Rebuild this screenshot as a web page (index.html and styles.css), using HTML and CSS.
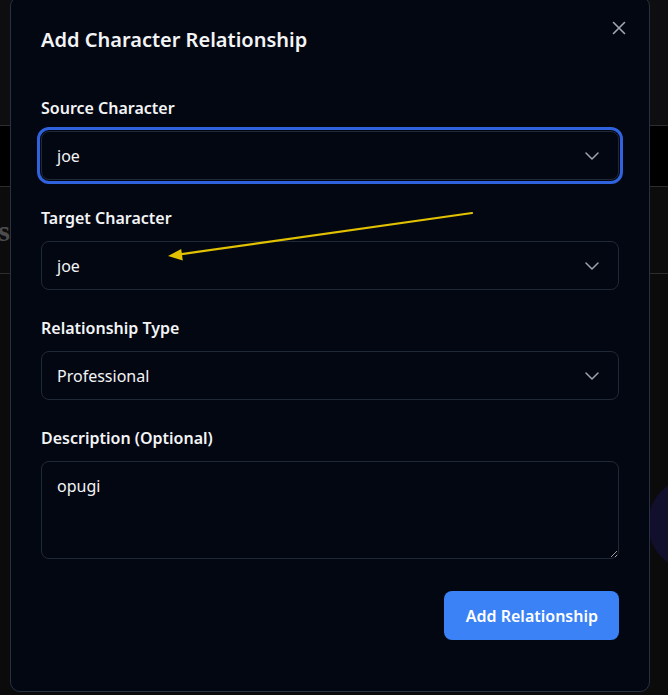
FILE: index.html
```html
<!DOCTYPE html>
<html lang="en">
<head>
<meta charset="utf-8">
<title>Add Character Relationship</title>
<link rel="stylesheet" href="styles.css">
</head>
<body>
<div class="page">
  <header class="topbar"></header>
  <nav class="tabs"></nav>
  <section class="heading-row">
    <div class="heading-clip"><h1 class="page-title">Relationships</h1></div>
  </section>
  <main class="content"></main>
  <div class="fab"></div>
</div>

<div class="overlay">
  <div class="dialog" role="dialog" aria-labelledby="dlg-title">
    <button class="close" type="button" aria-label="Close">
      <svg width="14" height="14" viewBox="0 0 14 14" fill="none" stroke="currentColor" stroke-width="1.6" stroke-linecap="round"><path d="M1.5 1.5l11 11M12.5 1.5l-11 11"/></svg>
    </button>
    <h2 class="title" id="dlg-title">Add Character Relationship</h2>
    <form class="form">
      <div class="field">
        <label class="label">Source Character</label>
        <div class="select is-focused"><span>joe</span><svg class="chev" width="14" height="8" viewBox="0 0 14 8" fill="none" stroke="currentColor" stroke-width="1.5" stroke-linecap="round" stroke-linejoin="round"><path d="M1 1l6 6 6-6"/></svg></div>
      </div>
      <div class="field">
        <label class="label">Target Character</label>
        <div class="select"><span>joe</span><svg class="chev" width="14" height="8" viewBox="0 0 14 8" fill="none" stroke="currentColor" stroke-width="1.5" stroke-linecap="round" stroke-linejoin="round"><path d="M1 1l6 6 6-6"/></svg></div>
      </div>
      <div class="field">
        <label class="label">Relationship Type</label>
        <div class="select"><span>Professional</span><svg class="chev" width="14" height="8" viewBox="0 0 14 8" fill="none" stroke="currentColor" stroke-width="1.5" stroke-linecap="round" stroke-linejoin="round"><path d="M1 1l6 6 6-6"/></svg></div>
      </div>
      <div class="field">
        <label class="label" for="desc">Description (Optional)</label>
        <textarea class="textarea" id="desc">opugi</textarea>
      </div>
      <div class="actions">
        <button class="primary" type="button">Add Relationship</button>
      </div>
    </form>
  </div>
  <svg class="annotation" width="668" height="695" viewBox="0 0 668 695">
    <line x1="472" y1="213" x2="180" y2="254.3" stroke="#e2c100" stroke-width="2.2" stroke-linecap="round"/>
    <polygon points="168,256 181.2,249 182.8,260.5" fill="#e2c100"/>
  </svg>
</div>
</body>
</html>
```

FILE: styles.css
```css
* { box-sizing: border-box; }

html, body {
  margin: 0;
  height: 100%;
}

body {
  background: #0b0b0c;
  font-family: "Noto Sans", "Open Sans", sans-serif;
  overflow: hidden;
}

.page {
  position: relative;
  height: 695px;
}

.topbar {
  height: 126px;
  background: #0e0e10;
  border-bottom: 1px solid #2c2c31;
}

.tabs {
  height: 61px;
  background: #000;
  border-bottom: 1px solid #2c2c31;
}

.heading-row {
  height: 87px;
  background: #0c0c0d;
  border-bottom: 1px solid #2c2c31;
  display: flex;
  align-items: center;
}

.heading-clip {
  width: 10px;
  display: flex;
  justify-content: flex-end;
  overflow: hidden;
  padding-top: 2px;
}

.page-title {
  margin: 0;
  white-space: nowrap;
  font-family: "Liberation Serif", serif;
  font-size: 30px;
  font-weight: 700;
  color: #4b4b4e;
}

.content {
  height: 300px;
}

.fab {
  position: absolute;
  left: 648px;
  top: 477px;
  width: 94px;
  height: 94px;
  border-radius: 50%;
  background: #120f2d;
}

.overlay {
  position: fixed;
  inset: 0;
}

.dialog {
  position: absolute;
  left: 10px;
  top: -4px;
  width: 640px;
  height: 696px;
  background: #030712;
  border: 1px solid #283142;
  border-radius: 10px;
  padding: 29px 30px;
  color: #f3f4f6;
}

.close {
  position: absolute;
  right: 22px;
  top: 23px;
  width: 16px;
  height: 16px;
  padding: 1px;
  border: 0;
  background: none;
  color: #a3a8b3;
  display: flex;
  align-items: center;
  justify-content: center;
}

.title {
  margin: 0;
  font-size: 20px;
  line-height: 28px;
  font-weight: 600;
  color: #f3f4f6;
}

.form {
  margin-top: 42px;
  display: flex;
  flex-direction: column;
  gap: 26px;
}

.field {
  display: flex;
  flex-direction: column;
  gap: 11px;
}

.label {
  font-size: 16px;
  line-height: 24px;
  font-weight: 600;
  color: #f3f4f6;
}

.select {
  height: 49px;
  border: 1px solid #1f2937;
  border-radius: 8px;
  background: #030712;
  padding: 0 19px 0 15px;
  display: flex;
  align-items: center;
  justify-content: space-between;
  font-size: 16px;
  color: #f3f4f6;
}

.select.is-focused {
  outline: 3px solid #2f62dc;
  outline-offset: 1px;
}

.chev {
  color: #9ca3af;
  margin-top: 1px;
}

.textarea {
  display: block;
  width: 100%;
  height: 98px;
  margin: 0;
  border: 1px solid #1f2937;
  border-radius: 8px;
  background: #030712;
  color: #f3f4f6;
  padding: 12px 15px;
  font-family: inherit;
  font-size: 16px;
  line-height: 24px;
  resize: vertical;
  color-scheme: dark;
}

.actions {
  margin-top: 6px;
  display: flex;
  justify-content: flex-end;
}

.primary {
  height: 49px;
  padding: 0 21px 0 22px;
  border: 0;
  border-radius: 8px;
  background: #3b82f6;
  color: #fff;
  font-family: inherit;
  font-size: 16px;
  font-weight: 600;
}

.annotation {
  position: absolute;
  left: 0;
  top: 0;
  pointer-events: none;
}
```
